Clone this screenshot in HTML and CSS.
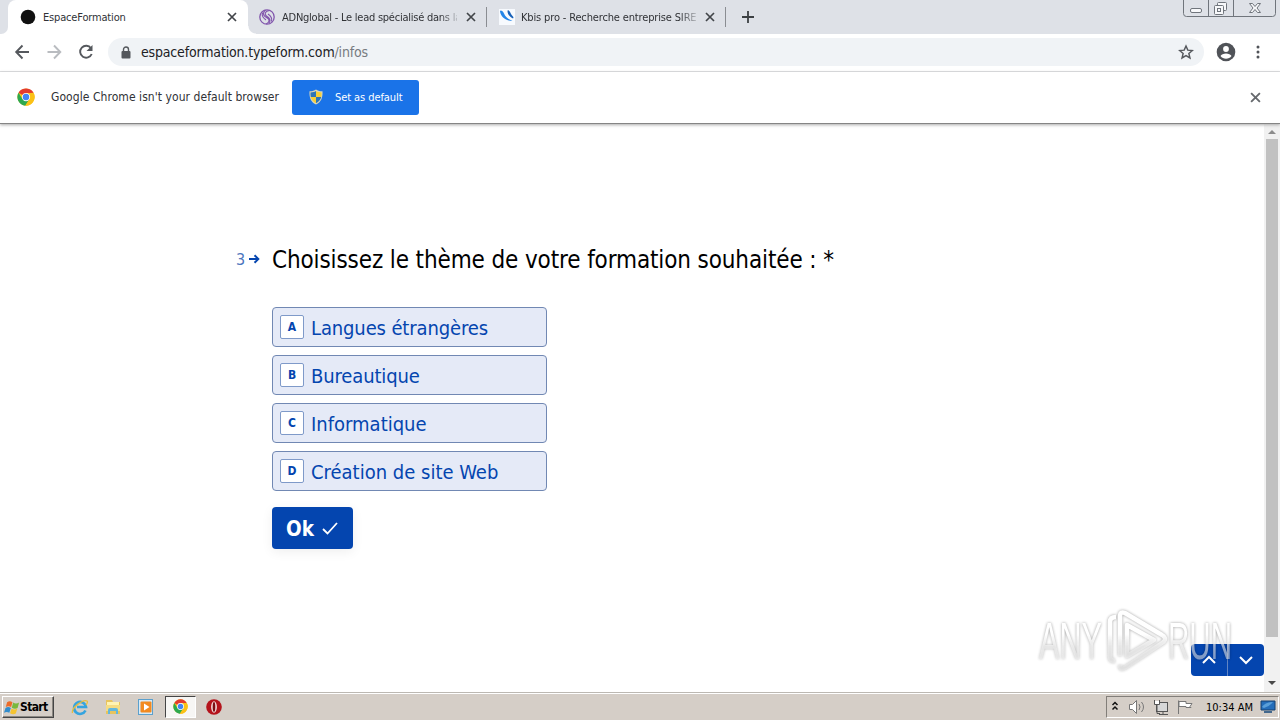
FILE: index.html
```html
<!DOCTYPE html>
<html lang="fr">
<head>
<meta charset="utf-8">
<title>EspaceFormation</title>
<link rel="stylesheet" href="styles.css">
</head>
<body>
<svg class="defs" width="0" height="0">
  <symbol id="chrome" viewBox="0 0 48 48">
    <circle cx="24" cy="24" r="23" fill="#fbc116"/>
    <path d="M24 24 4.1 12.5A23 23 0 0 1 43.9 12.5L44 13H24z" fill="#e33b2e"/>
    <path d="M4.1 12.5A23 23 0 0 0 22 47L33.5 29.5 24 24 14.5 29.500z" fill="#2da94f"/>
    <path d="M43.900 12.500A23 23 0 0 1 22 47L33.500 29.500 34 13z" fill="#fbc116"/>
    <circle cx="24" cy="24" r="11" fill="#fff"/>
    <circle cx="24" cy="24" r="8.700" fill="#4285f4"/>
  </symbol>
  <symbol id="close" viewBox="0 0 10 10"><path d="M1 1l8 8M9 1L1 9" fill="none" stroke="currentColor" stroke-width="1.700"/></symbol>
</svg>
<header class="tabs">
  <div class="edge"></div>
  <div class="tab active">
    <svg class="favicon" viewBox="0 0 16 16"><circle cx="8" cy="8" r="7.300" fill="#111"/></svg>
    <span class="tab-title t1">EspaceFormation</span>
    <svg class="x"><use href="#close"/></svg>
  </div>
  <div class="tab second">
    <svg class="favicon" viewBox="0 0 16 16" fill="none" stroke="#8257ad"><circle cx="8" cy="8" r="7.200" stroke-width="1.300"/><path d="M6.500 1C1.500 6 7 8 9 9.500 11 11 10 14 7 15M10.500 1.500C6 2 5 5 7.500 7c3 2 5 4 2.500 7.500M3.500 3.500C2.500 7 4 9 7 11M12.500 12.500C13.500 9 12 7 9 5" stroke-width="1.100"/></svg>
    <span class="tab-title t2">ADNglobal - Le lead spécialisé dans la</span>
    <svg class="x"><use href="#close"/></svg>
  </div>
  <div class="tab third">
    <svg class="favicon" viewBox="0 0 16 16"><rect width="16" height="16" fill="#f7fafe"/><path d="M1 2.500C2 8 6 11.500 13.500 12 9 10 6.500 8 5 4.500 4 2 1 .5 1 2.500z" fill="#2385e8"/><path d="M8.500 2c0 3 2 6 5.500 7.500 1.500-1.500-1-2.500-2-4.500-1-3-3.500-5-3.500-3z" fill="#1761b8"/></svg>
    <span class="tab-title t3">Kbis pro - Recherche entreprise SIRE</span>
    <svg class="x"><use href="#close"/></svg>
  </div>
  <svg class="plus" viewBox="0 0 12 12"><path d="M6 0v12M0 6h12" stroke="#3c4043" stroke-width="1.800"/></svg>
  <svg class="winbtns" viewBox="0 0 94 18" fill="none" stroke="#70757c">
    <path d="M.5 0v13.500q0 3 3 3h86q3 0 3-3V0M25.500 0v16M50.500 0v16"/>
    <rect x="7.500" y="8.500" width="11" height="4" rx="1.500" fill="#f7f8fa"/>
    <rect x="34.500" y="2.500" width="9" height="8" rx="1" fill="#f7f8fa"/><rect x="31.500" y="5.500" width="9" height="9" rx="1" fill="#f7f8fa"/><rect x="34.500" y="8.500" width="3" height="3"/>
    <path d="M66.500 3.500h3l2.500 3 2.500-3h3L74 8l3.500 4.500h-3l-2.500-3-2.500 3h-3L70 8z" fill="#f7f8fa"/>
  </svg>
</header>
<nav class="toolbar">
  <svg class="navs" viewBox="0 0 94 20" fill="none" stroke-width="1.900">
    <path d="M15 10H2.500M8.500 3.500L2.200 10l6.300 6.500" stroke="#55585d"/>
    <path d="M33.500 10H46M40 3.500L46.300 10 40 16.500" stroke="#b9bcc0"/>
    <path d="M77 6.200A6 6 0 1 0 77.700 12" stroke="#55585d"/><path d="M78.500 3v6h-6z" fill="#55585d"/>
  </svg>
  <div class="omnibox">
    <svg class="lock" viewBox="0 0 10 13"><rect x=".5" y="5" width="9" height="7.500" rx="1" fill="#55585d"/><path d="M2.500 5V3.500a2.500 2.500 0 0 1 5 0V5" fill="none" stroke="#55585d" stroke-width="1.400"/></svg>
    <span class="url">espaceformation.typeform.com<span class="path">/infos</span></span>
    <svg class="star" viewBox="0 0 24 24"><path d="M12 3l2.700 6.200 6.800.6-5.200 4.500 1.600 6.600L12 17.400l-5.900 3.500 1.600-6.600-5.200-4.500 6.800-.6z" fill="none" stroke="#55585d" stroke-width="2.200"/></svg>
  </div>
  <svg class="user" viewBox="0 0 20 20"><circle cx="10" cy="10" r="9.300" fill="#505358"/><circle cx="10" cy="7" r="2.900" fill="#fff"/><path d="M4.500 14c1.500-3.500 9.500-3.500 11 0-2.500 3.500-8.500 3.500-11 0z" fill="#fff"/></svg>
  <svg class="dots" viewBox="0 0 4 16" fill="#505358"><circle cx="2" cy="3" r="1.500"/><circle cx="2" cy="8" r="1.500"/><circle cx="2" cy="13" r="1.500"/></svg>
</nav>
<section class="infobar">
  <svg class="chrome"><use href="#chrome"/></svg>
  <span class="notice">Google Chrome isn't your default browser</span>
  <div class="default">
    <svg viewBox="0 0 16 16"><path d="M8 .5C6 2 4 2.300 1.500 2.200 1.200 8 2.500 13 8 15.500 13.500 13 14.800 8 14.500 2.200 12 2.300 10 2 8 .5z" fill="#d9d6bb"/><path d="M8 2v6H2.800c-.3-1.500-.4-3-.3-4.600C5 3.400 6.500 3 8 2zM8 8h5.200c-.7 2.700-2.300 4.900-5.200 6.200z" fill="#2d75b7"/><path d="M8 2c1.500 1 3 1.400 5.500 1.400.1 1.600 0 3.100-.3 4.600H8zM8 8v6.200C5.100 12.900 3.500 10.700 2.800 8z" fill="#f7cf36"/></svg>
    <span>Set as default</span>
  </div>
  <svg class="dismiss"><use href="#close"/></svg>
</section>
<main class="page">
  <div class="form">
    <div class="heading">
      <div class="number"><span>3</span><svg viewBox="0 0 11 10"><path d="M0 5h9M5.500 1.200L9.300 5 5.500 8.800" fill="none" stroke="#0445af" stroke-width="2"/></svg></div>
      <div class="question">Choisissez le thème de votre formation souhaitée : *</div>
    </div>
    <div class="choices">
      <div class="choice"><b>A</b><span class="c1">Langues étrangères</span></div>
      <div class="choice"><b>B</b><span class="c2">Bureautique</span></div>
      <div class="choice"><b>C</b><span class="c3">Informatique</span></div>
      <div class="choice"><b>D</b><span class="c4">Création de site Web</span></div>
    </div>
    <div class="ok"><span>Ok</span><svg viewBox="0 0 16 13"><path d="M1 7l4.500 4.500L15 1" fill="none" stroke="#fff" stroke-width="1.800"/></svg></div>
  </div>
  <div class="scroll">
    <svg viewBox="0 0 16 15"><path d="M4 10l4-4 4 4z" fill="#8c8c8c"/></svg>
    <div class="thumb"></div>
    <svg class="down" viewBox="0 0 16 15"><path d="M4 5h8l-4 4z" fill="#484848"/></svg>
  </div>
  <div class="pager">
    <svg viewBox="0 0 36 32"><path d="M12 19l6-6 6 6" fill="none" stroke="#fff" stroke-width="2"/></svg>
    <svg viewBox="0 0 36 32"><path d="M12 13l6 6 6-6" fill="none" stroke="#fff" stroke-width="2"/></svg>
  </div>
  <svg class="watermark" viewBox="0 0 210 70">
    <defs><linearGradient id="fade" gradientUnits="userSpaceOnUse" x1="0" y1="8" x2="0" y2="60"><stop offset=".35" stop-color="#fff"/><stop offset=".6" stop-color="#eee" stop-opacity=".75"/><stop offset="1" stop-color="#e6e6e6" stop-opacity=".6"/></linearGradient></defs>
    <g class="wm-text" fill="url(#fade)"><text x="3" y="51" textLength="63" lengthAdjust="spacingAndGlyphs">ANY</text><text x="132" y="51" textLength="64" lengthAdjust="spacingAndGlyphs">RUN</text></g>
    <path class="wm-mark" d="M80 9q-6 0-6 5v35q0 4 5 4M84 48V8q0-5 5-3l37 22q6 4 0 8L90 59q-6 4-6-2M91 17l27 15-27 16z" fill="none" stroke="url(#fade)" stroke-width="4.500" stroke-linejoin="round"/>
  </svg>
</main>
<footer class="taskbar">
  <div class="start"><svg viewBox="0 0 18 16"><path d="M3.500 2q3-2 6 0L8 7.500q-3-2-6 0z" fill="#ec6b28"/><path d="M10.300 2.500q3 2 6.700 0L15.300 8.500q-3 2-6.500-.3z" fill="#79b83d"/><path d="M1.700 8.500q3-2 6 0l-1.700 5.500q-3-2-6 0z" fill="#318ccc"/><path d="M8.500 9.200q3 2 6.500 0l-1.700 5.500q-3 2-6.500-.3z" fill="#f5c431"/></svg><span>Start</span></div>
  <svg class="task ie" viewBox="0 0 18 18" fill="none"><path d="M14.500 12.500a6 6 0 1 1 .5-3.500H6" stroke="#35a4df" stroke-width="2.600"/><path d="M1.500 15C0 10 12 1 16 3c1 .7 0 3-1 4" stroke="#e5bd40" stroke-width="1.300"/></svg>
  <svg class="task" viewBox="0 0 18 18"><path d="M2 2h6l1 2h7v12H2z" fill="#e8c45d"/><path d="M3 4h12v7H3z" fill="#fff3b2"/><path d="M2 7h14v6H2z" fill="#f5dc83"/><path d="M4 16v-4q0-2 2-2h6q2 0 2 2v4h-2v-3H6v3z" fill="#62b7dd"/></svg>
  <svg class="task" viewBox="0 0 18 18"><rect x="1.500" y="1.500" width="14" height="15" fill="#d9eaf5" stroke="#5ba0cd"/><rect x="3.500" y="3.500" width="11" height="11" rx="1" fill="#f28a20"/><path d="M7 5.500v7L12.500 9z" fill="#fff"/></svg>
  <div class="running"><svg><use href="#chrome"/></svg></div>
  <svg class="task opera" viewBox="0 0 18 18"><circle cx="9" cy="9" r="7.800" fill="#b4131b"/><ellipse cx="9" cy="9" rx="2.900" ry="5.700" fill="#f4dddd"/><ellipse cx="9" cy="9" rx="1.300" ry="4.900" fill="#7c0e13"/></svg>
  <div class="tray">
    <svg class="tray-icons" viewBox="0 0 90 20" fill="none" stroke="#777">
      <path d="M5.500 8l2.500-2.500L10.500 8M5.500 12.500L8 10l2.500 2.500" stroke="#111" stroke-width="1.500"/>
      <path d="M22.500 7.500h3l4-4v13l-4-4h-3z" fill="#fff"/><path d="M32 7q2 3 0 6M34.500 5q4 5 0 10"/>
      <rect x="49.500" y="5.500" width="11" height="9" fill="#d7d7d7" stroke="#555"/><path d="M52 17.500h9M56 15v2M47.500 3v4.500h5V3M50 8v8.500h3" stroke="#555"/><rect x="48" y="4" width="4" height="3" fill="#fff" stroke="none"/>
      <path d="M71.500 17V3.500M72 4.500h7v2h6l-2 3 1 1h-5v-1h-7z" fill="#fff"/>
    </svg>
    <span class="clock">10:34 AM</span>
    <svg class="desktop" viewBox="0 0 16 14"><path d="M1 1h14v9H1z" fill="#246db9" stroke="#17406e"/><path d="M2 7Q5 2 13 2q-3 4-9 6z" fill="#5a9fd9"/><path d="M4 11h8v2H4z" fill="#43688d"/></svg>
  </div>
</footer>
</body>
</html>
```
FILE: styles.css
```css
* { box-sizing: border-box; }
body { margin: 0; width: 1280px; height: 720px; overflow: hidden; display: flex; flex-direction: column; background: #fff; font-family: "DejaVu Sans Condensed", "DejaVu Sans", sans-serif; font-stretch: condensed; color: #303236; }
svg { display: block; flex: none; }
span, .question { white-space: nowrap; }
.defs { position: absolute; }
.tabs { height: 34px; flex: none; display: flex; align-items: center; background: #dee1e7; }
.edge { width: 8px; height: 34px; background: #fff; }
.edge::after { content: ""; display: block; height: 34px; background: #dee1e7; border-radius: 0 0 7px 0; }
.tab { height: 34px; display: flex; align-items: center; }
.active { width: 240px; padding-left: 12px; background: #fff; border-radius: 8px 8px 0 0; }
.second { width: 239px; padding-left: 11px; position: relative; }
.second::before { content: ""; position: absolute; left: 0; bottom: 0; width: 8px; height: 8px; background: radial-gradient(circle at 100% 0, transparent 7px, #fff 8px); }
.third { width: 239px; padding-left: 12px; }
.second::after, .third::after { content: ""; width: 1px; height: 20px; margin-left: 10px; background: #8a8d92; }
.favicon { width: 16px; height: 16px; margin-right: 7px; }
.tab-title { font-size: 11px; width: 176px; overflow: hidden; }
.t1 { width: 184px; letter-spacing: -.17px; }
.t2 { letter-spacing: -.24px; }
.t3 { letter-spacing: -.15px; margin-right: 4px; }
.t2, .t3 { -webkit-mask-image: linear-gradient(to right, #000 158px, transparent 180px); }
.third .favicon { margin-right: 6px; }
.x { width: 10px; height: 10px; margin-left: 8px; color: #424549; }
.t2 + .x { margin-left: 9px; }
.t3 + .x { margin-left: 4px; }
.active .x { margin-left: 0; }
.plus { width: 12px; height: 12px; margin-left: 16px; }
.winbtns { width: 94px; height: 18px; margin: 0 3px 16px auto; }
.toolbar { height: 38px; flex: none; display: flex; align-items: center; border-bottom: 1px solid #dedfe1; padding: 0 0 1px 14px; }
.navs { width: 94px; height: 20px; }
.omnibox { width: 1096px; height: 28px; border-radius: 14px; background: #f0f3f6; display: flex; align-items: center; padding: 0 10px 0 13px; }
.lock { width: 10px; height: 13px; }
.url { font-size: 14px; margin-left: 10px; letter-spacing: -.17px; color: #202124; }
.path { color: #777b80; }
.star { width: 16px; height: 16px; margin-left: auto; }
.user { width: 20px; height: 20px; margin-left: 12px; }
.dots { width: 4px; height: 16px; margin-left: 20px; }
.infobar { height: 52px; flex: none; display: flex; align-items: center; padding: 0 0 1px 17px; border-bottom: 1px solid #858585; box-shadow: 0 1px 3px #aaa; position: relative; z-index: 1; background: #fff; }
.chrome { width: 18px; height: 18px; }
.notice { width: 229px; margin-left: 16px; font-size: 12px; letter-spacing: .06px; }
.default { width: 127px; height: 35px; margin: 1px 0 0 12px; border-radius: 3px; background: #1a73e8; color: #fff; font-size: 11px; display: flex; align-items: center; padding: 0 0 1px 16px; gap: 11px; }
.default svg { width: 16px; height: 16px; }
.default span { letter-spacing: -.08px; }
.dismiss { width: 11px; height: 11px; margin-left: auto; margin-right: 19px; color: #66696d; }
.page { height: 568px; flex: none; display: flex; position: relative; }
.form { flex: 1; padding: 119px 0 0 236px; color: #0445af; }
.heading { display: flex; height: 32px; align-items: center; }
.number { width: 36px; display: flex; align-items: center; font-size: 16px; color: #4b75bd; }
.number span { width: 13px; }
.number svg { width: 11px; height: 10px; }
.question { color: #000; font-size: 24px; letter-spacing: -.125px; padding-top: 2px; }
.choices { margin: 32px 0 0 36px; display: grid; gap: 8px; width: 275px; }
.choice { height: 40px; border: 1px solid #7188b3; border-radius: 4px; background: #e5eaf7; display: flex; align-items: center; padding-left: 7px; font-size: 20px; }
.choice span { padding-top: 2px; }
.c1, .c2 { letter-spacing: -.13px; }
.choice b { width: 24px; height: 24px; border: 1px solid #7f9ac9; border-radius: 2px; background: #fff; display: grid; place-items: center; font-size: 12px; margin-right: 7px; }
.ok { margin: 16px 0 0 36px; width: 81px; height: 42px; border-radius: 4px; background: #0445af; color: #fff; font-weight: bold; font-size: 20.500px; display: flex; align-items: center; padding-left: 14px; box-shadow: 0 3px 12px #0001; }
.ok span { width: 36px; padding-top: 1px; }
.ok svg { width: 16px; height: 13px; }
.scroll { width: 16px; background: #f1f1f1; display: flex; flex-direction: column; }
.scroll svg { width: 16px; height: 15px; }
.thumb { width: 12px; height: 498px; margin-left: 2px; background: #c1c1c1; }
.scroll .down { margin-top: auto; margin-bottom: 1px; }
.pager { position: absolute; left: 1191px; top: 520px; width: 73px; height: 32px; border-radius: 4px; background: #0445af; display: flex; }
.pager svg { width: 36px; height: 32px; }
.pager svg + svg { width: 37px; border-left: 1px solid #6185c4; }
.watermark { position: absolute; left: 1036px; top: 484px; width: 210px; height: 70px; opacity: .8; filter: drop-shadow(0 0 1.500px #0007); }
.wm-text { font: bold 51px "Liberation Sans Narrow", "Liberation Sans", sans-serif; font-weight: normal; }
.taskbar { height: 28px; flex: none; display: flex; align-items: center; background: #d5cec7; border-top: 1px solid #bcb8b2; box-shadow: inset 0 1px #fff; padding-left: 2px; position: relative; }
.start { width: 52px; height: 22px; margin-top: 1px; border: 1px solid; border-color: #fff #454545 #454545 #fff; box-shadow: inset -1px -1px #8b8781; display: flex; align-items: center; padding-left: 1px; color: #000; font-size: 12px; font-weight: bold; }
.start svg { width: 16px; height: 15px; }
.start span { letter-spacing: -.65px; }
.task { width: 18px; height: 18px; margin-left: 16px; }
.ie { margin-left: 17px; }
.task + .task { margin-left: 15px; }
.running { width: 31px; height: 22px; margin-left: 10px; border: 1px solid; border-color: #454545 #fff #fff #454545; background: #f7f6f4; display: grid; place-items: center; }
.running svg { width: 15px; height: 15px; }
.opera { margin-left: 9px; }
.tray { width: 173px; height: 22px; margin-left: auto; margin-right: 1px; border: 1px solid; border-color: #827e79 #fff #fff #827e79; display: flex; align-items: center; color: #000; }
.tray-icons { width: 90px; height: 20px; }
.clock { width: 48px; margin-left: 9px; font-size: 11px; padding-top: 1px; }
.desktop { width: 16px; height: 14px; margin-left: 6px; }
```
